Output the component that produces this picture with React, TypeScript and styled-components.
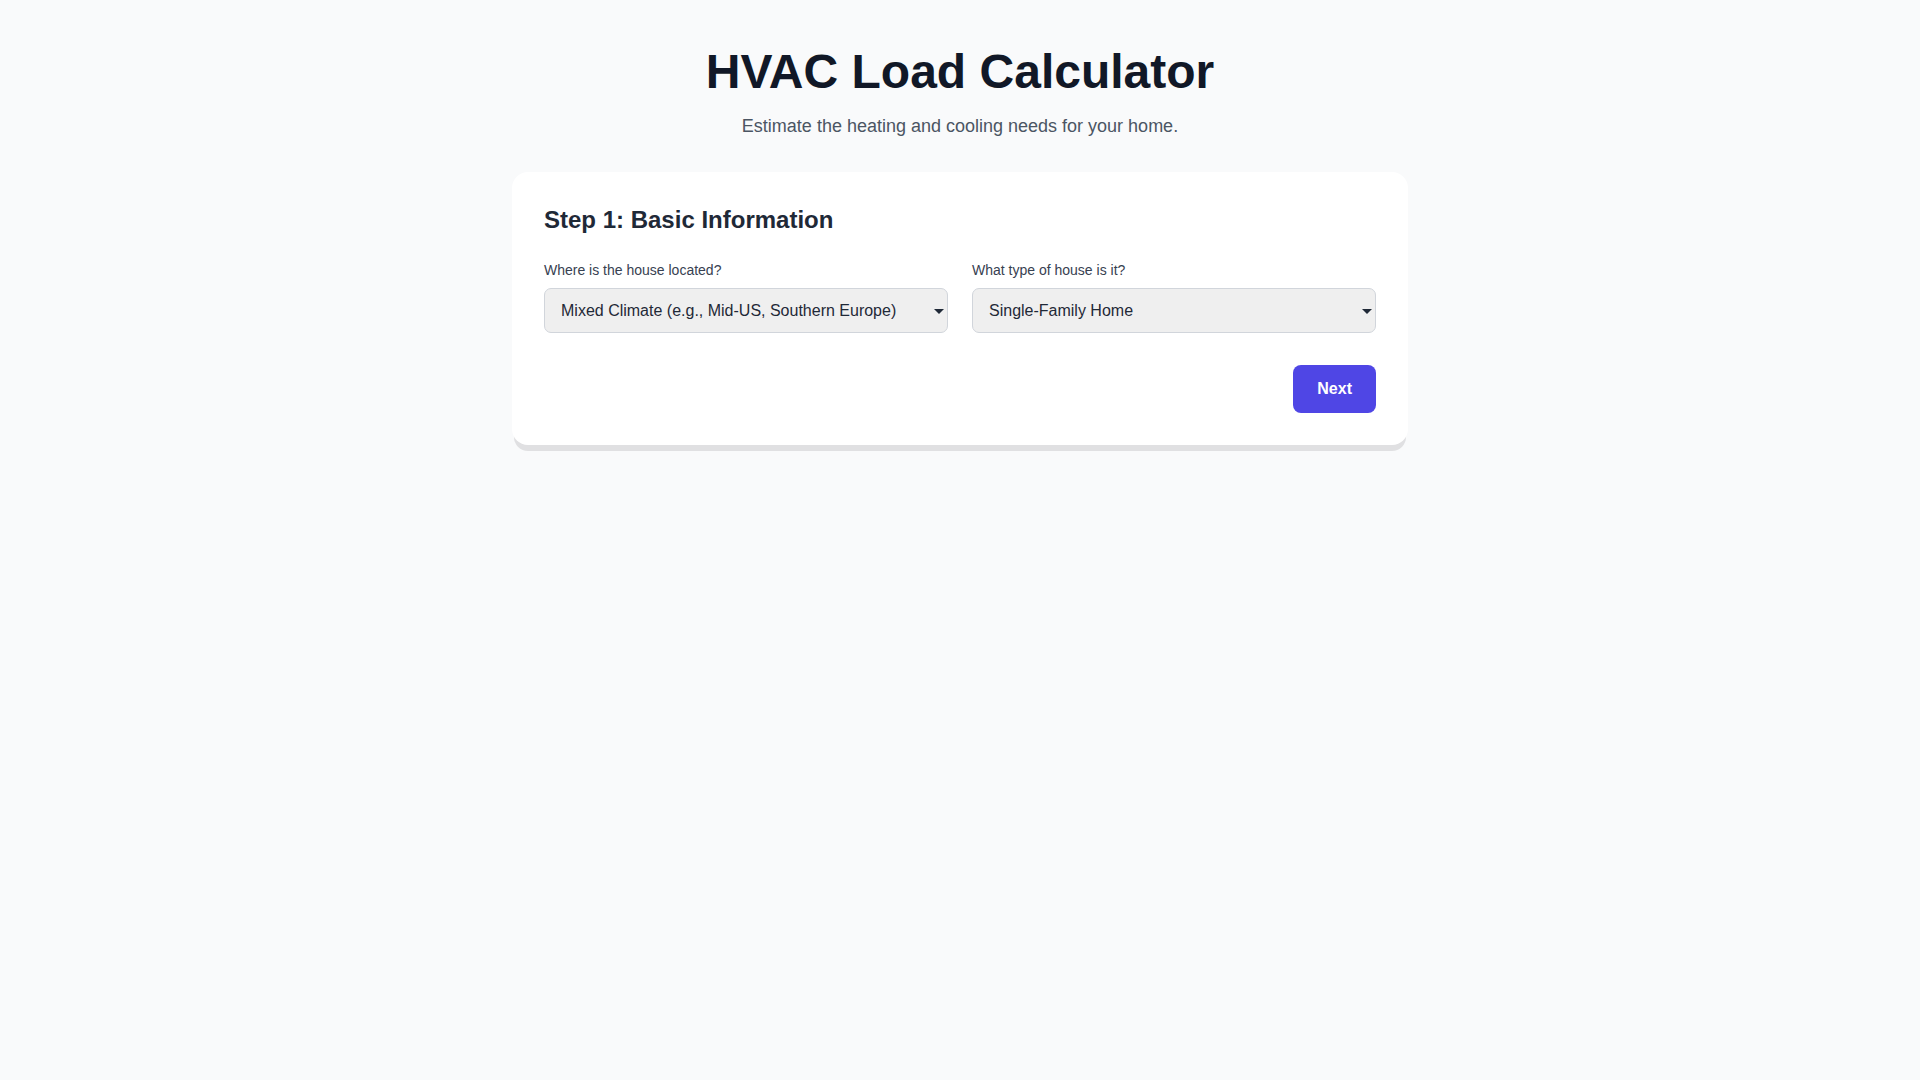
import styled, { createGlobalStyle } from 'styled-components';

const GlobalStyle = createGlobalStyle`
  html, body {
    margin: 0;
    padding: 0;
    background: #f9fafb;
    font-family: "Liberation Sans", Arial, sans-serif;
  }
  * { box-sizing: border-box; }
`;

const Page = styled.main`
  min-height: 100vh;
  padding: 48px 16px;
`;

const Container = styled.div`
  max-width: 896px;
  margin: 0 auto;
`;

const Header = styled.header`
  text-align: center;
  margin-bottom: 32px;
`;

const Title = styled.h1`
  margin: 0 0 16px;
  font-size: 48px;
  line-height: 1;
  font-weight: 700;
  color: #111827;
`;

const Subtitle = styled.p`
  margin: 0;
  font-size: 18px;
  line-height: 28px;
  color: #4b5563;
`;

const Card = styled.section`
  background: #fff;
  border-radius: 16px;
  padding: 32px;
  box-shadow: 0 8px 0 -2px #e0e0e2;
`;

const StepTitle = styled.h2`
  margin: 0 0 24px;
  font-size: 24px;
  line-height: 32px;
  font-weight: 700;
  color: #1f2937;
`;

const Fields = styled.div`
  display: grid;
  grid-template-columns: 1fr 1fr;
  gap: 24px;
`;

const Field = styled.div`
  display: flex;
  flex-direction: column;
`;

const Label = styled.label`
  font-size: 14px;
  line-height: 20px;
  color: #374151;
  margin-bottom: 8px;
`;

const SelectWrap = styled.div`
  position: relative;

  &::after {
    content: '';
    position: absolute;
    right: 4px;
    top: 50%;
    margin-top: -2px;
    border-left: 5px solid transparent;
    border-right: 5px solid transparent;
    border-top: 5px solid #1f2937;
    pointer-events: none;
  }
`;

const Select = styled.select`
  appearance: none;
  display: block;
  width: 100%;
  height: 45px;
  padding: 0 24px 0 16px;
  font-family: inherit;
  font-size: 16px;
  color: #1f2937;
  background-color: #efefef;
  border: 1px solid #d1d5db;
  border-radius: 7px;
`;

const Actions = styled.div`
  display: flex;
  justify-content: flex-end;
  margin-top: 32px;
`;

const Button = styled.button`
  padding: 12px 24px;
  font-family: inherit;
  font-size: 16px;
  line-height: 24px;
  font-weight: 700;
  color: #fff;
  background: #4f46e5;
  border: none;
  border-radius: 8px;
  cursor: pointer;
`;

export default function App() {
  return (
    <>
      <GlobalStyle />
      <Page>
        <Container>
          <Header>
            <Title>HVAC Load Calculator</Title>
            <Subtitle>Estimate the heating and cooling needs for your home.</Subtitle>
          </Header>
          <Card>
            <StepTitle>Step 1: Basic Information</StepTitle>
            <Fields>
              <Field>
                <Label htmlFor="climate">Where is the house located?</Label>
                <SelectWrap>
                  <Select id="climate" defaultValue="mixed">
                    <option value="cold">Cold Climate (e.g., Northern US, Canada)</option>
                    <option value="mixed">Mixed Climate (e.g., Mid-US, Southern Europe)</option>
                    <option value="hot">Hot Climate (e.g., Southern US, Middle East)</option>
                  </Select>
                </SelectWrap>
              </Field>
              <Field>
                <Label htmlFor="house">What type of house is it?</Label>
                <SelectWrap>
                  <Select id="house" defaultValue="single">
                    <option value="single">Single-Family Home</option>
                    <option value="town">Townhouse</option>
                    <option value="apartment">Apartment</option>
                  </Select>
                </SelectWrap>
              </Field>
            </Fields>
            <Actions>
              <Button type="button">Next</Button>
            </Actions>
          </Card>
        </Container>
      </Page>
    </>
  );
}
